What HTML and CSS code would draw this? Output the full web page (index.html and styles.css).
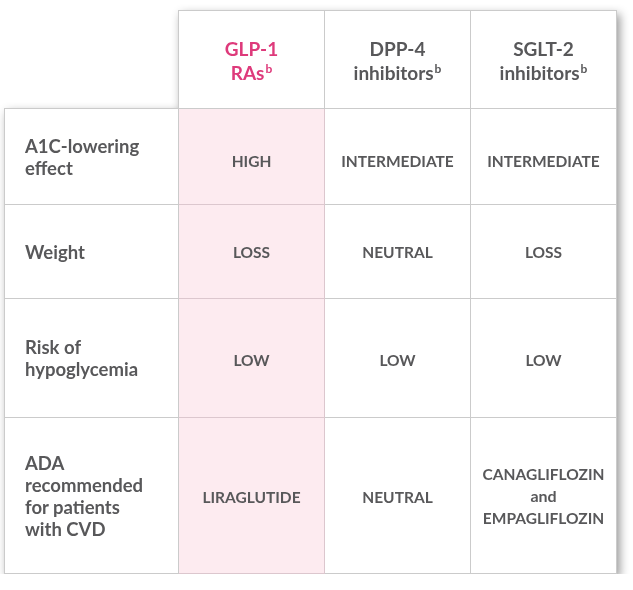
FILE: index.html
```html
<!DOCTYPE html>
<html>
<head>
<meta charset="utf-8">
<link rel="stylesheet" href="styles.css">
</head>
<body>
<div class="card">
  <table class="cmp">
    <colgroup>
      <col class="c-label"><col class="c-drug"><col class="c-drug"><col class="c-drug">
    </colgroup>
    <thead>
      <tr class="r-head">
        <th class="blank"></th>
        <th class="drug hl">GLP-1<br>RAs<sup>b</sup></th>
        <th class="drug">DPP-4<br>inhibitors<sup>b</sup></th>
        <th class="drug">SGLT-2<br>inhibitors<sup>b</sup></th>
      </tr>
    </thead>
    <tbody>
      <tr class="r1">
        <th class="label">A1C-lowering<br>effect</th>
        <td class="hl">HIGH</td>
        <td>INTERMEDIATE</td>
        <td>INTERMEDIATE</td>
      </tr>
      <tr class="r2">
        <th class="label">Weight</th>
        <td class="hl">LOSS</td>
        <td>NEUTRAL</td>
        <td>LOSS</td>
      </tr>
      <tr class="r3">
        <th class="label">Risk of<br>hypoglycemia</th>
        <td class="hl">LOW</td>
        <td>LOW</td>
        <td>LOW</td>
      </tr>
      <tr class="r4">
        <th class="label">ADA<br>recommended<br>for patients<br>with CVD</th>
        <td class="hl">LIRAGLUTIDE</td>
        <td>NEUTRAL</td>
        <td class="multi">CANAGLIFLOZIN<br><span class="lc">and</span><br>EMPAGLIFLOZIN</td>
      </tr>
    </tbody>
  </table>
</div>
</body>
</html>
```
FILE: styles.css
```css
html, body {
  margin: 0;
  padding: 0;
  background: #ffffff;
}
body {
  font-family: "Lato", "Open Sans", "Liberation Sans", sans-serif;
  color: #555557;
}
.card {
  padding: 10px 0 0 4px;
}
.cmp {
  border-collapse: collapse;
  table-layout: fixed;
  width: 611px;
  filter: drop-shadow(3px 4px 5px rgba(0, 0, 0, 0.4));
}
.c-label { width: 174px; }
.c-drug { width: 146px; }
.cmp th, .cmp td {
  border: 1px solid #cbcbcb;
  background: #ffffff;
  text-align: center;
  vertical-align: middle;
  padding: 0;
}
.cmp th.blank {
  background: transparent;
  border-top: none;
  border-left: none;
}
.cmp th.drug {
  font-size: 19px;
  line-height: 24px;
  font-weight: 700;
  color: #58585a;
  padding-top: 2px;
}
.cmp th.drug.hl {
  color: #de3a7b;
}
.cmp sup {
  font-size: 12px;
  line-height: 0;
  vertical-align: 7px;
  margin-left: 1px;
}
.cmp th.label {
  text-align: left;
  padding-left: 20px;
  font-size: 18.5px;
  line-height: 22px;
  font-weight: 700;
  color: #58585a;
}
.cmp td {
  font-size: 15.5px;
  line-height: 22px;
  font-weight: 700;
  color: #58585a;
}
.cmp td.hl {
  background: #fdebf0;
  border-color: #dcc7ce;
}
.r-head { height: 98px; }
.r1 { height: 96px; }
.r2 { height: 94px; }
.r3 { height: 119px; }
.r4 { height: 156px; }
.r1 td { padding-top: 8px; }
.r3 td { padding-top: 3px; }
.r4 td { padding-top: 2px; }
.r4 td.multi { padding-top: 0; }
.lc { font-size: 16px; }
```
